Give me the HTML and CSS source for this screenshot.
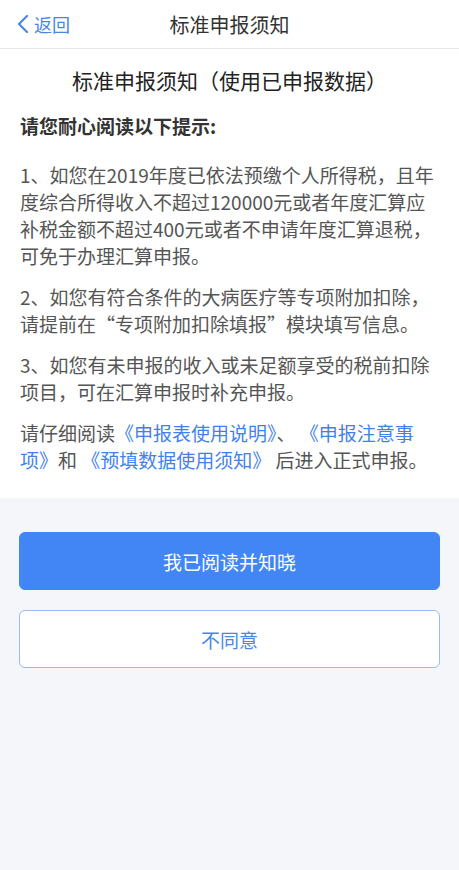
FILE: index.html
```html
<!DOCTYPE html>
<html lang="zh-CN">
<head>
    <meta charset="UTF-8">
    <meta name="viewport" content="width=device-width, initial-scale=1.0">
    <title>标准申报须知</title>
    <link rel="stylesheet" href="styles.css">
</head>
<body>
    <header class="nav">
        <a class="nav-back" href="#">
            <svg width="12" height="20" viewBox="0 0 12 20"><polyline points="10,2 2,10 10,18" fill="none" stroke="#4a86e8" stroke-width="2.2" stroke-linecap="round" stroke-linejoin="round"/></svg>
            <span>返回</span>
        </a>
        <div class="nav-title">标准申报须知</div>
        <div></div>
    </header>

    <section class="notice">
        <h1 class="notice-title">标准申报须知（使用已申报数据）</h1>
        <p class="lead">请您耐心阅读以下提示:</p>
        <p>1、如您在2019年度已依法预缴个人所得税，且年度综合所得收入不超过120000元或者年度汇算应补税金额不超过400元或者不申请年度汇算退税，可免于办理汇算申报。</p>
        <p>2、如您有符合条件的大病医疗等专项附加扣除，请提前在“专项附加扣除填报”模块填写信息。</p>
        <p>3、如您有未申报的收入或未足额享受的税前扣除项目，可在汇算申报时补充申报。</p>
        <p>请仔细阅读<a href="#">《申报表使用说明》</a>、 <a href="#">《申报注意事项》</a>和 <a href="#">《预填数据使用须知》</a> 后进入正式申报。</p>
    </section>

    <div class="actions">
        <button class="btn btn-primary">我已阅读并知晓</button>
        <button class="btn btn-outline">不同意</button>
    </div>
</body>
</html>
```

FILE: styles.css
```css
body {
    margin: 0;
    font-family: "Noto Sans CJK SC", "Noto Sans", sans-serif;
    background: #f5f6fa;
    color: #333;
}

.nav {
    height: 48px;
    display: grid;
    grid-template-columns: 1fr auto 1fr;
    align-items: center;
    background: #fff;
    border-bottom: 1px solid #e8e8ea;
}

.nav-back {
    display: flex;
    align-items: center;
    gap: 5px;
    padding-left: 17px;
    color: #4a86e8;
    font-size: 18px;
    text-decoration: none;
}

.nav-title {
    font-size: 20px;
    color: #333;
}

.notice {
    background: #fff;
    padding: 16px 20px 25px;
}

.notice-title {
    margin: 0;
    font-size: 21px;
    font-weight: normal;
    line-height: 30px;
    text-align: center;
    color: #222;
}

.notice p {
    margin: 14px 0 0;
    font-size: 19px;
    line-height: 27px;
    color: #555;
}

.notice .lead {
    margin-top: 17px;
    margin-bottom: 22px;
    font-weight: bold;
    color: #333;
}

.notice a {
    color: #3f82ee;
    text-decoration: none;
}

.actions {
    padding: 34px 19px;
    display: flex;
    flex-direction: column;
    gap: 20px;
}

.btn {
    height: 58px;
    border-radius: 6px;
    font-family: inherit;
    font-size: 19px;
    cursor: pointer;
}

.btn-primary {
    background: #4285f4;
    border: 1px solid #4285f4;
    color: #fff;
}

.btn-outline {
    background: #fff;
    border: 1px solid #9cb9f0;
    color: #4a86e8;
}
```
